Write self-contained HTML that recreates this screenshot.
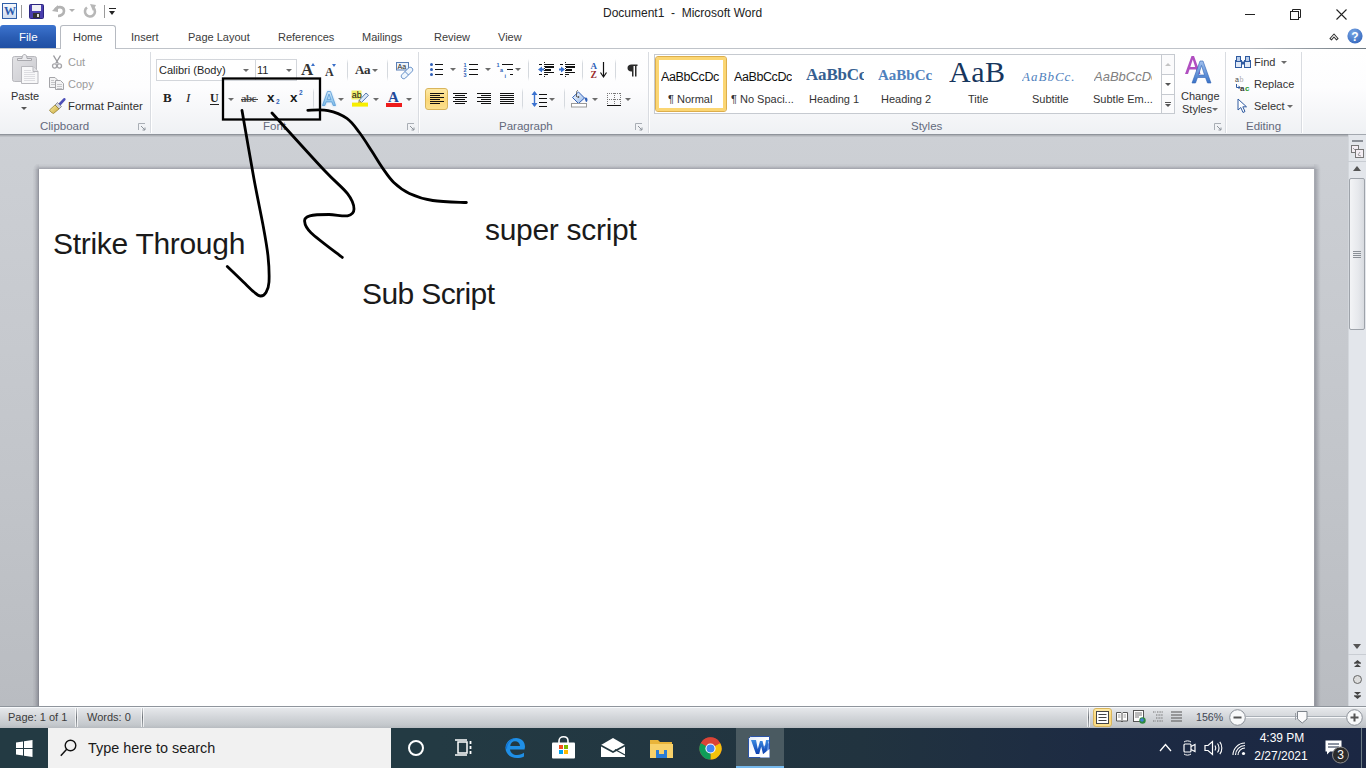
<!DOCTYPE html>
<html><head><meta charset="utf-8">
<style>
*{box-sizing:border-box;margin:0;padding:0}
html,body{width:1366px;height:768px;overflow:hidden;background:#fff;font-family:"Liberation Sans",sans-serif;font-size:11px;color:#3b3b3b;position:relative}
.a{position:absolute;white-space:nowrap}
svg{position:absolute;overflow:visible}
#ribbon{left:0;top:48px;width:1366px;height:87px;background:linear-gradient(#fff 0%,#fdfdfe 45%,#eff1f4 100%);border-top:1px solid #bfc3c9;border-bottom:1px solid #a3a8af}
#docarea{left:0;top:135px;width:1348px;height:571px;background:linear-gradient(#cdd0d5 0%,#cbced3 10%,#c4c7cc 49%,#babdc2 96%,#b9bcc1 100%)}
#page{left:39px;top:169px;width:1275px;height:540px;background:#fff}
#vscroll{left:1348px;top:135px;width:18px;height:571px;background:#e3e6eb;border-left:1px solid #d3d7dc}
#status{left:0;top:706px;width:1366px;height:22px;background:linear-gradient(#f8fafc 0,#f8fafc 1px,#e6e8eb 1px,#d4d7db 45%,#c4c8cc 85%,#b7bbc0 100%);border-top:1px solid #8f959c}
#taskbar{left:0;top:728px;width:1366px;height:40px;background:linear-gradient(90deg,#233a43 0%,#233a43 32%,#21333f 63%,#1d2b43 80%,#1b2743 100%)}
.t{line-height:12px;height:12px;color:#3c3c3c}
.gl{top:120px;line-height:13px;color:#63697c;font-size:11.5px}
.sep{position:absolute;width:1px;background:linear-gradient(rgba(210,214,220,0),#d5d9de 20%,#d5d9de 80%,rgba(210,214,220,0))}
.gsep{position:absolute;top:52px;width:2px;height:81px;border-left:1px solid #d9dce1;border-right:1px solid #fff}
.dd{position:absolute;width:0;height:0;border-left:3px solid transparent;border-right:3px solid transparent;border-top:3px solid #6b6b6b}
.launch{position:absolute;width:7px;height:7px;border-left:1px solid #a0a6ae;border-top:1px solid #a0a6ae}
.doc{font-size:30px;line-height:34px;color:#1a1a1a;letter-spacing:-.3px}
</style></head><body>

<!-- ============ TITLE BAR ============ -->
<div class="a" style="left:0;top:0;width:1366px;height:48px;background:#fff"></div>
<!-- Word icon -->
<div class="a" style="left:2px;top:3px;width:15px;height:16px;border:1px solid #2f5ea8;background:linear-gradient(#f6f9fd,#cfdcf0)"></div>
<div class="a" style="left:3px;top:4px;width:13px;height:14px;font:bold 12px 'Liberation Serif',serif;color:#2a5aad;line-height:14px;text-align:center;letter-spacing:-1px">W</div>
<div class="a" style="left:21px;top:5px;width:1px;height:13px;background:#9a9a9a"></div>
<!-- Save icon -->
<svg style="left:29px;top:4px" width="15" height="15" viewBox="0 0 15 15"><rect x="0.5" y="0.5" width="14" height="14" rx="1" fill="#4a3fae" stroke="#2c2680"/><rect x="3" y="1" width="9" height="6" fill="#f0f0f5"/><rect x="4" y="9" width="7" height="5" fill="#333"/><rect x="8" y="10" width="2" height="3" fill="#ddd"/></svg>
<!-- Undo -->
<svg style="left:52px;top:4px" width="14" height="14" viewBox="0 0 14 14"><path d="M3 6 C5 2,12 2,12 7 C12 10,9 12,6 12" fill="none" stroke="#b3b3b3" stroke-width="2.6"/><path d="M0 7 L6 1 L6 8 Z" fill="#b3b3b3"/></svg>
<div class="dd" style="left:69px;top:9px;border-top-color:#b0b0b0"></div>
<!-- Redo -->
<svg style="left:83px;top:4px" width="14" height="14" viewBox="0 0 14 14"><path d="M4 3.5 A5 5 0 1 0 10.5 4" fill="none" stroke="#b7b7b7" stroke-width="2.6"/><path d="M7 0 L13 1 L10 7 Z" fill="#b7b7b7"/></svg>
<div class="a" style="left:104px;top:5px;width:1px;height:13px;background:#9a9a9a"></div>
<div class="a" style="left:109px;top:8px;width:7px;height:1px;background:#222"></div>
<div class="dd" style="left:109px;top:11px;border-left-width:3.5px;border-right-width:3.5px;border-top:4px solid #222"></div>
<!-- title -->
<div class="a t" style="left:603px;top:7px;font-size:12px;color:#222;white-space:pre">Document1  -  Microsoft Word</div>
<!-- window controls -->
<div class="a" style="left:1245px;top:14px;width:10px;height:1px;background:#222"></div>
<svg style="left:1290px;top:9px" width="11" height="11" viewBox="0 0 11 11"><rect x="0.5" y="2.5" width="8" height="8" fill="#fff" stroke="#222"/><path d="M2.5 2.5 V0.5 H10.5 V8.5 H8.5" fill="none" stroke="#222"/></svg>
<svg style="left:1336px;top:9px" width="11" height="11" viewBox="0 0 11 11"><path d="M0.5 0.5 L10.5 10.5 M10.5 0.5 L0.5 10.5" stroke="#222" stroke-width="1.1"/></svg>

<!-- ============ TABS ============ -->
<div class="a" style="left:0;top:25px;width:56px;height:23px;background:linear-gradient(#3c74cf,#2a5cb3 55%,#1f4fa3);border-radius:3px 3px 0 0"></div>
<div class="a t" style="left:19px;top:31px;color:#fff;font-size:11.5px">File</div>
<div class="a" style="left:60px;top:25px;width:56px;height:24px;background:#fff;border:1px solid #b6bac1;border-bottom:none;border-radius:3px 3px 0 0;z-index:2"></div>
<div class="a t" style="left:73px;top:31px;z-index:3;color:#3a3a3a">Home</div>
<div class="a t" style="left:131px;top:31px">Insert</div>
<div class="a t" style="left:188px;top:31px">Page Layout</div>
<div class="a t" style="left:278px;top:31px">References</div>
<div class="a t" style="left:362px;top:31px">Mailings</div>
<div class="a t" style="left:434px;top:31px">Review</div>
<div class="a t" style="left:498px;top:31px">View</div>
<svg style="left:1329px;top:32px" width="10" height="9" viewBox="0 0 10 9"><path d="M1 6.5 L5 2 L9 6.5 L7.5 7.8 L5 5 L2.5 7.8 Z" fill="#fff" stroke="#333" stroke-width="1.1" stroke-linejoin="round"/></svg>
<svg style="left:1347px;top:28px" width="16" height="16" viewBox="0 0 16 16"><defs><radialGradient id="hg" cx="40%" cy="30%" r="70%"><stop offset="0" stop-color="#7aa7e6"/><stop offset="1" stop-color="#3a6cc0"/></radialGradient></defs><circle cx="8" cy="8" r="7.6" fill="url(#hg)"/><text x="8" y="12.5" font-family="Liberation Sans" font-weight="bold" font-size="12" fill="#fff" text-anchor="middle">?</text></svg>

<!-- ============ RIBBON ============ -->
<div id="ribbon" class="a"></div>
<div class="a" style="left:1200px;top:48px;width:166px;height:1px;background:linear-gradient(90deg,#b9bdc3 0%,#b9bdc3 30%,#6d7880 100%)"></div>
<!-- group separators -->
<div class="gsep" style="left:150px"></div>
<div class="gsep" style="left:418px"></div>
<div class="gsep" style="left:648px"></div>
<div class="gsep" style="left:1225px"></div>
<div class="gsep" style="left:1301px"></div>
<!-- group labels -->
<div class="a gl" style="left:40px">Clipboard</div>
<div class="a gl" style="left:263px">Font</div>
<div class="a gl" style="left:499px">Paragraph</div>
<div class="a gl" style="left:911px">Styles</div>
<div class="a gl" style="left:1246px">Editing</div>
<!-- launchers -->
<svg style="left:138px;top:123px" width="8" height="8" viewBox="0 0 8 8"><path d="M0.5 7 V0.5 H7" fill="none" stroke="#a9aeb5"/><path d="M3 3 L7 7 M7 4.5 V7 H4.5" fill="none" stroke="#8d939b"/></svg>
<svg style="left:407px;top:123px" width="8" height="8" viewBox="0 0 8 8"><path d="M0.5 7 V0.5 H7" fill="none" stroke="#a9aeb5"/><path d="M3 3 L7 7 M7 4.5 V7 H4.5" fill="none" stroke="#8d939b"/></svg>
<svg style="left:635px;top:123px" width="8" height="8" viewBox="0 0 8 8"><path d="M0.5 7 V0.5 H7" fill="none" stroke="#a9aeb5"/><path d="M3 3 L7 7 M7 4.5 V7 H4.5" fill="none" stroke="#8d939b"/></svg>
<svg style="left:1214px;top:123px" width="8" height="8" viewBox="0 0 8 8"><path d="M0.5 7 V0.5 H7" fill="none" stroke="#a9aeb5"/><path d="M3 3 L7 7 M7 4.5 V7 H4.5" fill="none" stroke="#8d939b"/></svg>

<!-- ===== Clipboard ===== -->
<svg style="left:11px;top:53px" width="28" height="33" viewBox="0 0 28 33">
 <defs><linearGradient id="cbg" x1="0" y1="0" x2="1" y2="1"><stop offset="0" stop-color="#e2e2e5"/><stop offset="1" stop-color="#cacacf"/></linearGradient></defs>
 <rect x="1.5" y="3.5" width="24" height="25" rx="2" fill="url(#cbg)" stroke="#b8b8bd"/>
 <path d="M6.5 7.5 H20.5 V5.5 H16 C16 3,15 1.5,13.5 1.5 C12 1.5,11 3,11 5.5 H6.5 Z" fill="#ececef" stroke="#a8a8ad"/>
 <path d="M10.5 13.5 H22 L27 18.5 V30.5 H10.5 Z" fill="#f8f8f9" stroke="#b8b8bd"/>
 <path d="M22 13.5 V18.5 H27" fill="#e3e3e6" stroke="#b8b8bd"/>
 <path d="M13 17.5 H20 M13 19.5 H24 M13 21.5 H24 M13 23.5 H24 M13 25.5 H24 M13 27.5 H24" stroke="#d6d6da" stroke-width=".8"/>
</svg>
<div class="a t" style="left:11px;top:90px;color:#2f2f2f;font-size:11px">Paste</div>
<div class="dd" style="left:21px;top:107px;border-top-color:#555"></div>
<svg style="left:52px;top:55px" width="10" height="14" viewBox="0 0 10 14"><path d="M1.5 0.5 L6.3 8.5 M8.5 0.5 L3.7 8.5" stroke="#9a9a9e" stroke-width="1.4"/><circle cx="2.6" cy="11" r="2.1" fill="none" stroke="#a5a5a9" stroke-width="1.3"/><circle cx="7.4" cy="11" r="2.1" fill="none" stroke="#a5a5a9" stroke-width="1.3"/></svg>
<div class="a t" style="left:68px;top:56px;color:#9b9b9b">Cut</div>
<svg style="left:49px;top:77px" width="15" height="13" viewBox="0 0 15 13"><path d="M0.5 0.5 H6 L8.5 3 V10.5 H0.5 Z" fill="#f3f3f4" stroke="#a4a4a8"/><path d="M2 3.5 H5 M2 5.5 H6.5 M2 7.5 H6.5" stroke="#b9b9bd" stroke-width=".8"/><path d="M6.5 3.5 H11.5 L14.5 6.5 V12.5 H6.5 Z" fill="#f3f3f4" stroke="#a4a4a8"/><path d="M8 7.5 H13 M8 9.5 H13 M8 11.5 H13" stroke="#b9b9bd" stroke-width=".8"/></svg>
<div class="a t" style="left:68px;top:78px;color:#9b9b9b">Copy</div>
<svg style="left:49px;top:98px" width="16" height="16" viewBox="0 0 16 16"><defs><linearGradient id="brs" x1="0" y1="0" x2="1" y2="1"><stop offset="0" stop-color="#fbf0a8"/><stop offset="1" stop-color="#c9a83a"/></linearGradient></defs><path d="M15.3 1.3 L11 6" stroke="#4d4fb8" stroke-width="2.6" stroke-linecap="round"/><path d="M8.5 4.5 L12.5 8.5 L10 11 L6 7 Z" fill="#cfd2da" stroke="#6d7078" stroke-width=".7"/><path d="M6 7 L10 11 L4.5 15.5 C3 15,1 13.5,0.5 12 Z" fill="url(#brs)" stroke="#8a7628" stroke-width=".7"/></svg>
<div class="a t" style="left:68px;top:100px;color:#2f2f2f;font-size:11.3px">Format Painter</div>

<!-- ===== Font ===== -->
<div class="a" style="left:156px;top:59px;width:100px;height:22px;border:1px solid #d3d6db;background:#fff"></div>
<div class="a" style="left:255px;top:59px;width:42px;height:22px;border:1px solid #d3d6db;background:#fff"></div>
<div class="a t" style="left:159px;top:64px;color:#1f1f1f">Calibri (Body)</div>
<div class="dd" style="left:243px;top:69px"></div>
<div class="a t" style="left:257px;top:64px;color:#1f1f1f">11</div>
<div class="dd" style="left:286px;top:69px"></div>
<!-- grow/shrink -->
<div class="a" style="left:301px;top:61px;font:bold 17px/18px 'Liberation Serif',serif;color:#333">A</div>
<div class="a" style="left:311px;top:63px;width:0;height:0;border-left:2.5px solid transparent;border-right:2.5px solid transparent;border-bottom:3px solid #3a70c9"></div>
<div class="a" style="left:325px;top:66px;font:bold 12px/13px 'Liberation Serif',serif;color:#333">A</div>
<div class="a" style="left:332px;top:64px;width:0;height:0;border-left:2.5px solid transparent;border-right:2.5px solid transparent;border-top:3px solid #3a70c9"></div>
<div class="sep" style="left:347px;top:59px;height:22px"></div>
<div class="a" style="left:355px;top:62px;font:bold 13px/15px 'Liberation Serif',serif;color:#333;letter-spacing:-.5px">Aa</div>
<div class="dd" style="left:372px;top:69px"></div>
<div class="sep" style="left:387px;top:59px;height:22px"></div>
<svg style="left:396px;top:62px" width="17" height="16" viewBox="0 0 17 16"><rect x="0.5" y="0.5" width="12" height="7.5" fill="#eef3fa" stroke="#5a7fb5"/><text x="1.5" y="7" font-family="Liberation Sans" font-size="7" fill="#222">Aa</text><path d="M6 12.5 L12.5 6 C13.5 5,15 5,16 6 C17 7,17 8.5,16 9.5 L9.5 16 C8.5 17,7 17,6 16 C5 15,5 13.5,6 12.5 Z" fill="#eef5fc" stroke="#4f7fc0" stroke-width=".9"/><path d="M9 9.5 L12.5 13" stroke="#4f7fc0" stroke-width=".9"/></svg>
<!-- row 2 -->
<div class="a" style="left:163px;top:91px;font:bold 13px/14px 'Liberation Serif',serif;color:#222">B</div>
<div class="a" style="left:186px;top:91px;font:italic 13px/14px 'Liberation Serif',serif;color:#222">I</div>
<div class="a" style="left:210px;top:91px;font:bold 12px/14px 'Liberation Serif',serif;color:#222">U</div>
<div class="a" style="left:210px;top:104px;width:9px;height:1px;background:#222"></div>
<div class="dd" style="left:228px;top:98px"></div>
<div class="a" style="left:241px;top:91px;font:bold 11px/14px 'Liberation Serif',serif;color:#555;letter-spacing:-.6px">abc</div>
<div class="a" style="left:241px;top:99px;width:17px;height:1px;background:#444"></div>
<div class="a" style="left:267px;top:91px;font:bold 13.5px/14px 'Liberation Sans',sans-serif;color:#1a1a1a">x</div>
<div class="a" style="left:276px;top:98px;font:bold 6.5px/7px 'Liberation Sans',sans-serif;color:#2f5fb8">2</div>
<div class="a" style="left:290px;top:91px;font:bold 13.5px/14px 'Liberation Sans',sans-serif;color:#1a1a1a">x</div>
<div class="a" style="left:299px;top:89px;font:bold 6.5px/7px 'Liberation Sans',sans-serif;color:#2f5fb8">2</div>
<div class="sep" style="left:313px;top:88px;height:22px"></div>
<svg style="left:320px;top:89px" width="18" height="19" viewBox="0 0 18 19"><defs><filter id="gl" x="-40%" y="-40%" width="180%" height="180%"><feGaussianBlur stdDeviation="1.1"/></filter><linearGradient id="tea" x1="0" y1="0" x2="0" y2="1"><stop offset="0" stop-color="#cfe6f8"/><stop offset="1" stop-color="#7cbde9"/></linearGradient></defs><path d="M7.5 2 H10.5 L16 17 H13 L11.7 13.3 H6.3 L5 17 H2 Z" fill="#a9d3f3" filter="url(#gl)"/><path d="M7.5 2.5 H10.5 L15.5 16.5 H13.2 L11.8 12.8 H6.2 L4.8 16.5 H2.5 Z M7 10.6 H11 L9 5 Z" fill="url(#tea)" stroke="#5a9ad6" stroke-width=".8" fill-rule="evenodd"/></svg>
<div class="dd" style="left:338px;top:98px"></div>
<svg style="left:351px;top:90px" width="19" height="18" viewBox="0 0 19 18"><rect x="0.5" y="0.5" width="10" height="9" fill="#f1ee6a"/><text x="0.8" y="8" font-family="Liberation Sans" font-size="9" fill="#111">ab</text><path d="M8 10.5 L15 3 L17.5 5.3 L10.5 12.5 Z" fill="#dbe8f7" stroke="#4a6fa8" stroke-width=".9"/><path d="M8 10.5 L10.5 12.5 L7.5 13 Z" fill="#e6c36a" stroke="#8a6a2a" stroke-width=".5"/><rect x="1" y="12.6" width="16" height="4" fill="#f7ee00"/></svg>
<div class="dd" style="left:373px;top:98px"></div>
<div class="a" style="left:388px;top:89px;font:bold 15px/16px 'Liberation Serif',serif;color:#1f4a9a">A</div>
<div class="a" style="left:386px;top:103px;width:16px;height:4px;background:#ee1c1c"></div>
<div class="dd" style="left:406px;top:98px"></div>



<!-- ===== Paragraph ===== -->
<svg style="left:429px;top:62px" width="15" height="14" viewBox="0 0 15 14"><circle cx="2.5" cy="2.5" r="1.5" fill="#2f5fb8"/><circle cx="2.5" cy="7.5" r="1.5" fill="#2f5fb8"/><circle cx="2.5" cy="12.5" r="1.5" fill="#2f5fb8"/><g shape-rendering="crispEdges"><rect x="6" y="2" width="8" height="1" fill="#111"/><rect x="6" y="7" width="8" height="1" fill="#111"/><rect x="6" y="12" width="8" height="1" fill="#111"/></g></svg>
<div class="dd" style="left:450px;top:68px"></div>
<svg style="left:463px;top:61px" width="16" height="16" viewBox="0 0 16 16"><text x="0.5" y="6" font-family="Liberation Sans" font-weight="bold" font-size="5.5" fill="#2f5fb8">1</text><text x="0.5" y="11" font-family="Liberation Sans" font-weight="bold" font-size="5.5" fill="#2f5fb8">2</text><text x="0.5" y="16" font-family="Liberation Sans" font-weight="bold" font-size="5.5" fill="#2f5fb8">3</text><g shape-rendering="crispEdges"><rect x="6" y="3" width="9" height="1" fill="#111"/><rect x="6" y="8" width="9" height="1" fill="#111"/><rect x="6" y="13" width="9" height="1" fill="#111"/></g></svg>
<div class="dd" style="left:485px;top:68px"></div>
<svg style="left:496px;top:61px" width="18" height="17" viewBox="0 0 18 17"><text x="0.5" y="6" font-family="Liberation Sans" font-weight="bold" font-size="5.5" fill="#2f5fb8">1</text><text x="4" y="11" font-family="Liberation Sans" font-weight="bold" font-size="5.5" fill="#2f5fb8">a</text><text x="8.5" y="16.5" font-family="Liberation Sans" font-weight="bold" font-size="5.5" fill="#2f5fb8">i</text><g shape-rendering="crispEdges"><rect x="6" y="3" width="11" height="1" fill="#111"/><rect x="11" y="8" width="6" height="1" fill="#111"/><rect x="14" y="13" width="3" height="1" fill="#111"/></g></svg>
<div class="dd" style="left:515px;top:68px"></div>
<div class="sep" style="left:528px;top:59px;height:22px"></div>
<svg style="left:538px;top:62px" width="16" height="16" viewBox="0 0 16 16" shape-rendering="crispEdges"><rect x="6" y="0" width="1" height="1" fill="#222"/><rect x="6" y="2" width="1" height="1" fill="#222"/><rect x="6" y="4" width="1" height="1" fill="#222"/><rect x="6" y="6" width="1" height="1" fill="#222"/><rect x="6" y="8" width="1" height="1" fill="#222"/><rect x="6" y="10" width="1" height="1" fill="#222"/><rect x="6" y="12" width="1" height="1" fill="#222"/><rect x="6" y="14" width="1" height="1" fill="#222"/><rect x="1" y="2" width="3" height="1" fill="#111"/><rect x="7" y="2" width="9" height="1" fill="#111"/><rect x="7" y="4" width="9" height="2" fill="#111"/><rect x="7" y="7" width="6" height="2" fill="#111"/><rect x="7" y="10" width="9" height="1" fill="#111"/><rect x="1" y="12" width="3" height="1" fill="#111"/><rect x="7" y="12" width="3" height="1" fill="#111"/><path d="M0 7.5 L4 4.5 V6.5 H6 V8.5 H4 V10.5 Z" fill="#3a72d0" shape-rendering="auto"/></svg>
<svg style="left:559px;top:62px" width="16" height="16" viewBox="0 0 16 16" shape-rendering="crispEdges"><rect x="6" y="0" width="1" height="1" fill="#222"/><rect x="6" y="2" width="1" height="1" fill="#222"/><rect x="6" y="4" width="1" height="1" fill="#222"/><rect x="6" y="6" width="1" height="1" fill="#222"/><rect x="6" y="8" width="1" height="1" fill="#222"/><rect x="6" y="10" width="1" height="1" fill="#222"/><rect x="6" y="12" width="1" height="1" fill="#222"/><rect x="6" y="14" width="1" height="1" fill="#222"/><rect x="1" y="2" width="3" height="1" fill="#111"/><rect x="7" y="2" width="9" height="1" fill="#111"/><rect x="7" y="4" width="9" height="2" fill="#111"/><rect x="7" y="7" width="6" height="2" fill="#111"/><rect x="7" y="10" width="9" height="1" fill="#111"/><rect x="1" y="12" width="3" height="1" fill="#111"/><rect x="7" y="12" width="3" height="1" fill="#111"/><path d="M6 7.5 L2 4.5 V6.5 H0 V8.5 H2 V10.5 Z" fill="#3a72d0" shape-rendering="auto"/></svg>
<div class="sep" style="left:582px;top:59px;height:22px"></div>
<svg style="left:590px;top:61px" width="17" height="17" viewBox="0 0 17 17"><text x="0.5" y="8" font-family="Liberation Serif" font-weight="bold" font-size="9" fill="#2f5fb8">A</text><text x="0.5" y="16.5" font-family="Liberation Serif" font-weight="bold" font-size="9.5" fill="#9a2e2e">Z</text><path d="M13.5 1 V15" stroke="#111" stroke-width="1.2"/><path d="M10.5 11.5 L13.5 16 L16.5 11.5" fill="none" stroke="#111" stroke-width="1.2"/></svg>
<div class="sep" style="left:615px;top:59px;height:22px"></div>
<svg style="left:627px;top:64px" width="11" height="13" viewBox="0 0 11 13"><path d="M4.5 0.5 H10.5 V2 H9.5 V12.5 H8 V2 H6.5 V12.5 H5 V7.5 H4.5 C2 7.5,0.5 6,0.5 4 C0.5 2,2 0.5,4.5 0.5 Z" fill="#2b2b2b"/></svg>
<!-- row 2 -->
<div class="a" style="left:425px;top:88px;width:23px;height:22px;border:1px solid #d9b55c;border-radius:3px;background:linear-gradient(#fde9a6,#fbd777 55%,#fbe08e)"></div>
<svg style="left:430px;top:93px" width="14" height="11" viewBox="0 0 14 11" shape-rendering="crispEdges"><rect x="0" y="0" width="14" height="1" fill="#111"/><rect x="0" y="2" width="10" height="1" fill="#111"/><rect x="0" y="4" width="14" height="1" fill="#111"/><rect x="0" y="6" width="10" height="1" fill="#111"/><rect x="0" y="8" width="14" height="1" fill="#111"/><rect x="0" y="10" width="10" height="1" fill="#111"/></svg>
<svg style="left:453px;top:93px" width="14" height="11" viewBox="0 0 14 11" shape-rendering="crispEdges"><rect x="0" y="0" width="14" height="1" fill="#111"/><rect x="2" y="2" width="10" height="1" fill="#111"/><rect x="0" y="4" width="14" height="1" fill="#111"/><rect x="2" y="6" width="10" height="1" fill="#111"/><rect x="0" y="8" width="14" height="1" fill="#111"/><rect x="2" y="10" width="10" height="1" fill="#111"/></svg>
<svg style="left:477px;top:93px" width="14" height="11" viewBox="0 0 14 11" shape-rendering="crispEdges"><rect x="0" y="0" width="14" height="1" fill="#111"/><rect x="4" y="2" width="10" height="1" fill="#111"/><rect x="0" y="4" width="14" height="1" fill="#111"/><rect x="4" y="6" width="10" height="1" fill="#111"/><rect x="0" y="8" width="14" height="1" fill="#111"/><rect x="4" y="10" width="10" height="1" fill="#111"/></svg>
<svg style="left:500px;top:93px" width="14" height="11" viewBox="0 0 14 11" shape-rendering="crispEdges"><rect x="0" y="0" width="14" height="1" fill="#111"/><rect x="0" y="2" width="14" height="1" fill="#111"/><rect x="0" y="4" width="14" height="1" fill="#111"/><rect x="0" y="6" width="14" height="1" fill="#111"/><rect x="0" y="8" width="14" height="1" fill="#111"/><rect x="0" y="10" width="14" height="1" fill="#111"/></svg>
<div class="sep" style="left:522px;top:88px;height:22px"></div>
<svg style="left:531px;top:90px" width="17" height="18" viewBox="0 0 17 18"><path d="M3.5 2 V16" stroke="#3a72d0" stroke-width="1.4"/><path d="M0.5 5 L3.5 1 L6.5 5 Z M0.5 13 L3.5 17 L6.5 13 Z" fill="#3a72d0"/><g shape-rendering="crispEdges"><rect x="8" y="4" width="8" height="1" fill="#111"/><rect x="8" y="8" width="8" height="1" fill="#111"/><rect x="8" y="12" width="8" height="1" fill="#111"/><rect x="8" y="16" width="8" height="1" fill="#111"/></g></svg>
<div class="dd" style="left:549px;top:98px"></div>
<div class="sep" style="left:564px;top:88px;height:22px"></div>
<svg style="left:571px;top:90px" width="18" height="18" viewBox="0 0 18 18"><defs><linearGradient id="bk" x1="0" y1="0" x2="1" y2="1"><stop offset="0" stop-color="#fff"/><stop offset="1" stop-color="#8fb4e8"/></linearGradient></defs><path d="M1.5 7.5 L7.5 2 L13.5 8 L7.5 13.5 Z" fill="url(#bk)" stroke="#2f5fb8" stroke-width="1"/><path d="M7 0.5 C6 0.5,5.5 1.5,5.5 2.5 V7" fill="none" stroke="#555" stroke-width=".9"/><circle cx="7.3" cy="7" r="1" fill="#555"/><path d="M13.5 8 C15.5 6.5,16.5 8,16.5 10 C16.5 11.5,15.5 12,15 12 C14.5 11,14 9.5,13.5 8 Z" fill="#2f5fb8"/><rect x="0.5" y="13.5" width="15" height="3.5" fill="#fff" stroke="#999"/></svg>
<div class="dd" style="left:592px;top:98px"></div>
<svg style="left:607px;top:93px" width="14" height="14" viewBox="0 0 14 14" shape-rendering="crispEdges"><rect x="0" y="0" width="1" height="1" fill="#777"/><rect x="0" y="6" width="1" height="1" fill="#777"/><rect x="2" y="0" width="1" height="1" fill="#777"/><rect x="2" y="6" width="1" height="1" fill="#777"/><rect x="4" y="0" width="1" height="1" fill="#777"/><rect x="4" y="6" width="1" height="1" fill="#777"/><rect x="6" y="0" width="1" height="1" fill="#777"/><rect x="6" y="6" width="1" height="1" fill="#777"/><rect x="8" y="0" width="1" height="1" fill="#777"/><rect x="8" y="6" width="1" height="1" fill="#777"/><rect x="10" y="0" width="1" height="1" fill="#777"/><rect x="10" y="6" width="1" height="1" fill="#777"/><rect x="12" y="0" width="1" height="1" fill="#777"/><rect x="12" y="6" width="1" height="1" fill="#777"/><rect x="0" y="0" width="1" height="1" fill="#777"/><rect x="7" y="0" width="1" height="1" fill="#777"/><rect x="13" y="0" width="1" height="1" fill="#777"/><rect x="0" y="2" width="1" height="1" fill="#777"/><rect x="7" y="2" width="1" height="1" fill="#777"/><rect x="13" y="2" width="1" height="1" fill="#777"/><rect x="0" y="4" width="1" height="1" fill="#777"/><rect x="7" y="4" width="1" height="1" fill="#777"/><rect x="13" y="4" width="1" height="1" fill="#777"/><rect x="0" y="6" width="1" height="1" fill="#777"/><rect x="7" y="6" width="1" height="1" fill="#777"/><rect x="13" y="6" width="1" height="1" fill="#777"/><rect x="0" y="8" width="1" height="1" fill="#777"/><rect x="7" y="8" width="1" height="1" fill="#777"/><rect x="13" y="8" width="1" height="1" fill="#777"/><rect x="0" y="10" width="1" height="1" fill="#777"/><rect x="7" y="10" width="1" height="1" fill="#777"/><rect x="13" y="10" width="1" height="1" fill="#777"/><rect x="0" y="12" width="14" height="1" fill="#111"/></svg>
<div class="dd" style="left:625px;top:98px"></div>

<!-- ===== Styles ===== -->
<div class="a" style="left:654px;top:54px;width:521px;height:60px;border:1px solid #c6cad0;background:#fff"></div>
<div class="a" style="left:655px;top:56px;width:72px;height:56px;border:1px solid #dcae4c;border-radius:3px;box-shadow:inset 0 0 0 3px #fbd673;background:#fff"></div>
<div class="a" style="left:661px;top:70px;width:59px;overflow:hidden;font:12.5px/14px 'Liberation Sans',sans-serif;color:#111;letter-spacing:-.4px">AaBbCcDc</div>
<div class="a t" style="left:668px;top:93px;color:#333">&#182; Normal</div>
<div class="a" style="left:734px;top:70px;width:58px;overflow:hidden;font:12.5px/14px 'Liberation Sans',sans-serif;color:#111;letter-spacing:-.4px">AaBbCcDc</div>
<div class="a t" style="left:731px;top:93px;color:#333">&#182; No Spaci...</div>
<div class="a" style="left:806px;top:66px;width:58px;overflow:hidden;font:bold 17px/18px 'Liberation Serif',serif;color:#365f91;letter-spacing:-.2px">AaBbCc</div>
<div class="a t" style="left:809px;top:93px;color:#333">Heading 1</div>
<div class="a" style="left:878px;top:67px;width:59px;overflow:hidden;font:bold 15px/17px 'Liberation Serif',serif;color:#4f81bd">AaBbCc</div>
<div class="a t" style="left:881px;top:93px;color:#333">Heading 2</div>
<div class="a" style="left:949px;top:62px;width:59px;height:24px;overflow:hidden"><div class="a" style="left:0;top:-5px;font:30px/30px 'Liberation Serif',serif;color:#17365d;letter-spacing:.5px">AaB</div></div>
<div class="a t" style="left:968px;top:93px;color:#333">Title</div>
<div class="a" style="left:1022px;top:69px;width:59px;overflow:hidden;font:italic 13px/15px 'Liberation Serif',serif;color:#4f81bd;letter-spacing:1px">AaBbCc.</div>
<div class="a t" style="left:1032px;top:93px;color:#333">Subtitle</div>
<div class="a" style="left:1094px;top:69px;width:58px;overflow:hidden;font:italic 13px/15px 'Liberation Sans',sans-serif;color:#808080;letter-spacing:0px">AaBbCcDc</div>
<div class="a t" style="left:1093px;top:93px;color:#333">Subtle Em...</div>
<!-- gallery scroll -->
<div class="a" style="left:1161px;top:54px;width:14px;height:60px;border:1px solid #c6cad0;background:#fbfbfc"></div>
<div class="a" style="left:1161px;top:74px;width:14px;height:21px;border:1px solid #c6cad0;background:#fff"></div>
<div class="a" style="left:1165px;top:63px;width:0;height:0;border-left:3px solid transparent;border-right:3px solid transparent;border-bottom:3px solid #c3c3c3"></div>
<div class="a" style="left:1165px;top:83px;width:0;height:0;border-left:3px solid transparent;border-right:3px solid transparent;border-top:3px solid #555"></div>
<div class="a" style="left:1165px;top:102px;width:6px;height:1px;background:#555"></div>
<div class="a" style="left:1165px;top:104px;width:0;height:0;border-left:3px solid transparent;border-right:3px solid transparent;border-top:3px solid #555"></div>
<!-- change styles -->
<svg style="left:1184px;top:55px" width="32" height="29" viewBox="0 0 32 29"><defs><linearGradient id="csA" x1="0" y1="0" x2="0" y2="1"><stop offset="0" stop-color="#9fc0ee"/><stop offset="1" stop-color="#3a73c8"/></linearGradient></defs><path d="M1 19 L7.5 1 H10 L16.5 19 H13.5 L12 14.5 H5.5 L4 19 Z M6.3 12 H11.2 L8.75 4.5 Z" fill="#b04fc0"/><path d="M8 28 L16 6 H19 L27 28 H23.5 L21.5 22.5 H13.5 L11.5 28 Z M14.5 20 H20.5 L17.5 10.5 Z" fill="url(#csA)" stroke="#2f62b3" stroke-width=".6"/></svg>
<div class="a t" style="left:1181px;top:90px;color:#333">Change</div>
<div class="a t" style="left:1182px;top:103px;color:#333">Styles</div>
<div class="dd" style="left:1212px;top:108px"></div>

<!-- ===== Editing ===== -->
<svg style="left:1235px;top:55px" width="16" height="13" viewBox="0 0 16 13"><rect x="0.5" y="5.5" width="6" height="7" fill="#dfe8f6" stroke="#2f5aa0"/><rect x="9.5" y="5.5" width="6" height="7" fill="#dfe8f6" stroke="#2f5aa0"/><rect x="1.5" y="1.5" width="4" height="5" fill="#b9cdea" stroke="#2f5aa0"/><rect x="10.5" y="1.5" width="4" height="5" fill="#b9cdea" stroke="#2f5aa0"/><rect x="6" y="6.5" width="4" height="3" fill="#2f5aa0"/></svg>
<div class="a t" style="left:1254px;top:56px;color:#333">Find</div>
<div class="dd" style="left:1281px;top:61px"></div>
<svg style="left:1235px;top:76px" width="17" height="16" viewBox="0 0 17 16"><text x="0" y="6" font-family="Liberation Sans" font-size="7" fill="#444">a</text><text x="4.5" y="6" font-family="Liberation Serif" font-size="8" fill="#aaa">b</text><path d="M1.5 8 V11.5 H5 M3.5 9.8 L5 11.5 L3.5 13" fill="none" stroke="#2f5aa0" stroke-width="1"/><text x="5" y="15" font-family="Liberation Sans" font-weight="bold" font-size="8" fill="#333">a</text><text x="10" y="15" font-family="Liberation Sans" font-weight="bold" font-size="8" fill="#2a9a2a">c</text></svg>
<div class="a t" style="left:1254px;top:78px;color:#333">Replace</div>
<svg style="left:1237px;top:98px" width="11" height="16" viewBox="0 0 11 16"><path d="M1 1 V12 L3.8 9.5 L6 14.5 L8 13.5 L5.8 8.8 H9.5 Z" fill="#fff" stroke="#2f5aa0" stroke-width="1" stroke-linejoin="round"/></svg>
<div class="a t" style="left:1254px;top:100px;color:#333">Select</div>
<div class="dd" style="left:1287px;top:105px"></div>

<!-- ============ DOC AREA ============ -->
<div id="docarea" class="a"></div>
<div class="a" style="left:0;top:134px;width:1348px;height:3px;background:linear-gradient(#8f949b 0,#8f949b 1px,#aeb1b6 1px,#aeb1b6 2px,#bfc2c7 2px)"></div>
<div class="a" style="left:33px;top:169px;width:6px;height:540px;background:linear-gradient(90deg,rgba(0,0,20,.03) 0,rgba(0,0,20,.03) 1px,rgba(0,0,20,.05) 1px,rgba(0,0,20,.05) 2px,rgba(0,0,20,.09) 2px,rgba(0,0,20,.09) 3px,rgba(0,0,20,.14) 3px,rgba(0,0,20,.14) 4px,rgba(0,0,20,.19) 4px,rgba(0,0,20,.19) 5px,rgba(0,0,20,.27) 5px)"></div>
<div class="a" style="left:1314px;top:169px;width:7px;height:540px;background:linear-gradient(90deg,rgba(0,0,20,.18) 0,rgba(0,0,20,.18) 1px,rgba(0,0,20,.2) 1px,rgba(0,0,20,.2) 2px,rgba(0,0,20,.16) 2px,rgba(0,0,20,.16) 3px,rgba(0,0,20,.12) 3px,rgba(0,0,20,.12) 4px,rgba(0,0,20,.08) 4px,rgba(0,0,20,.08) 5px,rgba(0,0,20,.04) 5px,rgba(0,0,20,.04) 6px,rgba(0,0,20,.01) 6px)"></div>
<div class="a" style="left:39px;top:164px;width:1275px;height:5px;background:linear-gradient(rgba(0,0,20,.02) 0,rgba(0,0,20,.02) 1px,rgba(0,0,20,.03) 1px,rgba(0,0,20,.03) 2px,rgba(0,0,20,.07) 2px,rgba(0,0,20,.07) 3px,rgba(0,0,20,.13) 3px,rgba(0,0,20,.13) 4px,rgba(0,0,20,.19) 4px)"></div>
<div class="a" style="left:33px;top:164px;width:6px;height:5px;background:radial-gradient(circle at 100% 100%,rgba(0,0,20,.2) 0,rgba(0,0,20,.08) 3px,rgba(0,0,20,0) 6px)"></div>
<div class="a" style="left:1314px;top:164px;width:7px;height:5px;background:radial-gradient(circle at 0 100%,rgba(0,0,20,.18) 0,rgba(0,0,20,.08) 3px,rgba(0,0,20,0) 7px)"></div>
<div id="page" class="a"></div>
<div id="vscroll" class="a"></div>
<!-- scrollbar parts -->
<div class="a" style="left:1352px;top:140px;width:11px;height:2px;background:#8a8f96"></div>
<svg style="left:1351px;top:145px" width="13" height="13" viewBox="0 0 13 13"><rect x="0.5" y="0.5" width="7" height="7" fill="#f4eef4" stroke="#777"/><rect x="4.5" y="4.5" width="8" height="8" fill="#f4eef4" stroke="#777"/><path d="M2 3 L4 5 M9 7 L7 10 L10 11" fill="none" stroke="#888" stroke-width=".8"/></svg>
<div class="a" style="left:1348px;top:161px;width:18px;height:1px;background:#c9cdd3"></div>
<div class="a" style="left:1353px;top:166px;width:0;height:0;border-left:4.5px solid transparent;border-right:4.5px solid transparent;border-bottom:5px solid #555"></div>
<div class="a" style="left:1349px;top:178px;width:16px;height:152px;border:1px solid #9ea3aa;border-radius:2px;background:linear-gradient(90deg,#f3f4f6,#e6e8ec 60%,#d8dbe0)"></div>
<div class="a" style="left:1353px;top:251px;width:8px;height:1px;background:#8a8f96;box-shadow:0 2px 0 #8a8f96,0 4px 0 #8a8f96,0 6px 0 #8a8f96"></div>
<div class="a" style="left:1353px;top:644px;width:0;height:0;border-left:4.5px solid transparent;border-right:4.5px solid transparent;border-top:5px solid #555"></div>
<div class="a" style="left:1348px;top:654px;width:18px;height:1px;background:#c9cdd3"></div>
<svg style="left:1353px;top:659px" width="9" height="9" viewBox="0 0 9 9"><path d="M1 4 L4.5 1 L8 4 Z M1 8 L4.5 5 L8 8 Z" fill="#444"/><path d="M1 4.2 H8" stroke="#444"/></svg>
<div class="a" style="left:1353px;top:675px;width:9px;height:9px;border:1px solid #666;border-radius:50%;background:#ddd"></div>
<svg style="left:1353px;top:691px" width="9" height="9" viewBox="0 0 9 9"><path d="M1 1 L4.5 4 L8 1 Z M1 5 L4.5 8 L8 5 Z" fill="#444"/><path d="M1 4.8 H8" stroke="#444"/></svg>

<!-- document text -->
<div class="a doc" style="left:53px;top:227px">Strike Through</div>
<div class="a doc" style="left:485px;top:213px">super script</div>
<div class="a doc" style="left:362px;top:277px;letter-spacing:-.6px">Sub Script</div>


<!-- ============ STATUS BAR ============ -->
<div id="status" class="a"></div>
<div class="a t" style="left:8px;top:711px;color:#3c3c3c">Page: 1 of 1</div>
<div class="a" style="left:75px;top:708px;width:3px;height:19px;background:linear-gradient(90deg,rgba(255,255,255,.7) 0,rgba(255,255,255,.7) 1px,transparent 1px,transparent 2px,rgba(255,255,255,.7) 2px)"></div><div class="a" style="left:76px;top:708px;width:1px;height:19px;background:linear-gradient(rgba(100,105,112,.2),#6c7177 50%,rgba(100,105,112,.2))"></div>
<div class="a t" style="left:87px;top:711px;color:#3c3c3c">Words: 0</div>
<div class="a" style="left:141px;top:708px;width:3px;height:19px;background:linear-gradient(90deg,rgba(255,255,255,.7) 0,rgba(255,255,255,.7) 1px,transparent 1px,transparent 2px,rgba(255,255,255,.7) 2px)"></div><div class="a" style="left:142px;top:708px;width:1px;height:19px;background:linear-gradient(rgba(100,105,112,.2),#6c7177 50%,rgba(100,105,112,.2))"></div>
<div class="a" style="left:1087px;top:708px;width:3px;height:19px;background:linear-gradient(90deg,rgba(255,255,255,.7) 0,rgba(255,255,255,.7) 1px,transparent 1px,transparent 2px,rgba(255,255,255,.7) 2px)"></div><div class="a" style="left:1088px;top:708px;width:1px;height:19px;background:linear-gradient(rgba(100,105,112,.2),#6c7177 50%,rgba(100,105,112,.2))"></div>
<div class="a" style="left:1093px;top:708px;width:19px;height:19px;border:1px solid #d9b55c;border-radius:3px;background:linear-gradient(#fde9a6,#fbd777 55%,#fbe08e)"></div>
<svg style="left:1096px;top:711px" width="13" height="13" viewBox="0 0 13 13"><rect x="0.5" y="0.5" width="12" height="12" fill="#fff" stroke="#444"/><path d="M2.5 3.5 H10.5 M2.5 6.5 H10.5 M2.5 9.5 H10.5" stroke="#444" stroke-width="1"/></svg>
<svg style="left:1116px;top:711px" width="12" height="12" viewBox="0 0 12 12"><path d="M0.5 1.5 H5 L6 2.5 L7 1.5 H11.5 V10 H7 L6 11 L5 10 H0.5 Z" fill="#fff" stroke="#555"/><path d="M6 2.5 V10" stroke="#555"/><path d="M2 4 H4.5 M2 6 H4.5 M7.5 4 H10 M7.5 6 H10" stroke="#888" stroke-width=".8"/></svg>
<svg style="left:1133px;top:710px" width="13" height="14" viewBox="0 0 13 14"><rect x="0.5" y="0.5" width="10" height="11" fill="#fff" stroke="#555"/><path d="M2 3 H9 M2 5 H9 M2 7 H6" stroke="#555" stroke-width=".8"/><circle cx="9.5" cy="10.5" r="3.2" fill="#2d8a3e"/><circle cx="9" cy="10" r="1.8" fill="#3f7fd6"/></svg>
<svg style="left:1153px;top:711px" width="10" height="12" viewBox="0 0 10 12"><path d="M0 1 H3 M4 1 H10 M3 4 H10 M3 7 H10 M0 10 H3 M4 10 H10" stroke="#666" stroke-width=".9" stroke-dasharray="1 .6"/></svg>
<svg style="left:1171px;top:711px" width="11" height="12" viewBox="0 0 11 12"><path d="M0 1 H11 M0 4 H11 M0 7 H11 M0 10 H11" stroke="#555" stroke-width="1.1"/></svg>
<div class="a t" style="left:1196px;top:711px;color:#414753;font-size:10.6px">156%</div>
<svg style="left:1229px;top:709px" width="17" height="17" viewBox="0 0 17 17"><circle cx="8.5" cy="8.5" r="7.8" fill="#f8f9fa" stroke="#8c9199"/><path d="M4.5 8.5 H12.5" stroke="#555" stroke-width="2"/></svg>
<div class="a" style="left:1246px;top:716px;width:100px;height:1px;background:#aab0b7"></div><div class="a" style="left:1246px;top:717px;width:100px;height:1px;background:#f7f8fa"></div>
<div class="a" style="left:1295px;top:713px;width:1px;height:7px;background:#9ca1a8"></div>
<svg style="left:1297px;top:711px" width="11" height="13" viewBox="0 0 11 13"><path d="M0.5 0.5 H10 V8 L5.25 12 L0.5 8 Z" fill="#fbfbfc" stroke="#7d838b"/></svg>
<svg style="left:1346px;top:709px" width="17" height="17" viewBox="0 0 17 17"><circle cx="8.5" cy="8.5" r="7.8" fill="#f8f9fa" stroke="#8c9199"/><path d="M4.5 8.5 H12.5 M8.5 4.5 V12.5" stroke="#555" stroke-width="2"/></svg>


<!-- ============ TASKBAR ============ -->
<div id="taskbar" class="a"></div>
<svg style="left:16px;top:740px" width="17" height="17" viewBox="0 0 17 17"><path d="M0 2.4 L7 1.4 V8 H0 Z M8 1.25 L16.5 0 V8 H8 Z M0 9 H7 V15.6 L0 14.6 Z M8 9 H16.5 V17 L8 15.75 Z" fill="#fff"/></svg>
<div class="a" style="left:48px;top:728px;width:343px;height:40px;background:#f1f1f1"></div>
<svg style="left:60px;top:739px" width="17" height="18" viewBox="0 0 17 18"><circle cx="10.5" cy="6.5" r="5.3" fill="none" stroke="#111" stroke-width="1.4"/><path d="M6.7 10.3 L0.8 16.8" stroke="#111" stroke-width="1.5"/></svg>
<div class="a" style="left:88px;top:740px;font-size:14.4px;line-height:17px;color:#1a1a1a">Type here to search</div>
<div class="a" style="left:408px;top:740px;width:16px;height:16px;border:2px solid #fff;border-radius:50%"></div>
<svg style="left:455px;top:739px" width="18" height="17" viewBox="0 0 18 17"><rect x="3" y="3" width="9" height="11" fill="none" stroke="#fff" stroke-width="1.5"/><path d="M0 1 H12 M0 16 H12" stroke="#fff" stroke-width="1.5"/><path d="M15.5 2 V5 M15.5 7 V10 M15.5 12 V15" stroke="#fff" stroke-width="1.8"/></svg>
<svg style="left:504px;top:738px" width="22" height="20" viewBox="0 0 22 20"><path d="M20.5 11.5 H6 C6.5 15,9.5 17,13 17 C16 17,18.5 16,20 14.8 V18.5 C18 19.5,15.5 20,13 20 C6 20,1.5 15.5,1.5 10 C1.5 4.5,6 0,12 0 C17.5 0,21 3.5,21 9 Z M6.2 8 H16 C15.8 5,13.8 3.2,11 3.2 C8.5 3.2,6.6 5,6.2 8 Z" fill="#1f8fe6"/><path d="M1.5 10 C3 3,9 0,12 0 C6 1.5,3 6,3 11 Z" fill="#0f6fd0"/></svg>
<svg style="left:551px;top:736px" width="25" height="23" viewBox="0 0 25 23"><path d="M8 7 V5 C8 2,10 0.8,12.5 0.8 C15 0.8,17 2,17 5 V7" fill="none" stroke="#fff" stroke-width="1.6"/><rect x="1" y="6.5" width="23" height="16" rx="1" fill="#fff"/><rect x="8" y="9" width="4" height="4" fill="#f25022"/><rect x="13" y="9" width="4" height="4" fill="#7fba00"/><rect x="8" y="14" width="4" height="4" fill="#00a4ef"/><rect x="13" y="14" width="4" height="4" fill="#ffb900"/></svg>
<svg style="left:601px;top:738px" width="24" height="19" viewBox="0 0 24 19"><path d="M0 7 L12 0 L24 7 V19 H0 Z" fill="#fff"/><path d="M0 7.5 L12 14 L24 7.5" fill="none" stroke="#22373f" stroke-width="1.6"/><path d="M14 11.5 L24 17" stroke="#22373f" stroke-width="1.2"/></svg>
<svg style="left:650px;top:739px" width="23" height="19" viewBox="0 0 23 19"><path d="M0 1 H8 L10 3 H22 V18 H0 Z" fill="#e9b43a"/><rect x="0" y="5" width="23" height="14" fill="#f8d16a"/><rect x="6" y="11" width="11" height="8" fill="#2a7cd6"/><rect x="9" y="11" width="5" height="4" fill="#f8d16a"/></svg>
<svg style="left:699px;top:737px" width="23" height="23" viewBox="0 0 24 24"><circle cx="12" cy="12" r="11.5" fill="#db4437"/><path d="M12 12 L22 6.2 A11.5 11.5 0 0 1 12 23.5 Z" fill="#f4c20d"/><path d="M12 12 L12 23.5 A11.5 11.5 0 0 1 2 6.2 Z" fill="#0f9d58"/><path d="M12 12 L2 6.2 A11.5 11.5 0 0 1 22 6.2 Z" fill="#db4437"/><circle cx="12" cy="12" r="5.3" fill="#fff"/><circle cx="12" cy="12" r="4.2" fill="#4285f4"/></svg>
<div class="a" style="left:736px;top:728px;width:48px;height:40px;background:#4a5a61"></div>
<div class="a" style="left:736px;top:766px;width:48px;height:2px;background:#76b9ed"></div>
<svg style="left:748px;top:736px" width="23" height="22" viewBox="0 0 23 22"><defs><linearGradient id="wtb" x1="0" y1="0" x2="1" y2="1"><stop offset="0" stop-color="#dfe9f8"/><stop offset=".5" stop-color="#fff"/><stop offset="1" stop-color="#f4f7fc"/></linearGradient><linearGradient id="wtw" x1="0" y1="0" x2="0" y2="1"><stop offset="0" stop-color="#3b8ae0"/><stop offset="1" stop-color="#0b3fb0"/></linearGradient></defs><path d="M2.5 0.5 H21.5 V21.5 H0.5 V2.5 Z" fill="url(#wtb)" stroke="#2b54a8"/><path d="M16 10 L21 7 V20 L16 19 Z" fill="#5b8fe0"/><path d="M3 4 H8 L9.8 13 L12 5 H14.5 L16.5 13 L18 4 H21 L18 18 H15 L13.2 10.5 L11.2 18 H8 Z" fill="url(#wtw)"/><path d="M14 19 L21.5 13 V21.5 H12 Z" fill="#fff"/></svg>
<!-- tray -->
<svg style="left:1159px;top:743px" width="13" height="9" viewBox="0 0 13 9"><path d="M1 8 L6.5 1.5 L12 8" fill="none" stroke="#fff" stroke-width="1.3"/></svg>
<svg style="left:1183px;top:740px" width="13" height="16" viewBox="0 0 13 16"><rect x="1" y="4" width="7" height="8" rx="1" fill="none" stroke="#fff" stroke-width="1.2"/><path d="M8 6.5 L12 4.5 V11.5 L8 9.5" fill="none" stroke="#fff" stroke-width="1.2"/><path d="M1 2 C3 0.5,6 0.5,8 2 M1 14 C3 15.5,6 15.5,8 14" fill="none" stroke="#fff" stroke-width="1"/></svg>
<svg style="left:1204px;top:740px" width="18" height="16" viewBox="0 0 18 16"><path d="M1 5.5 H4 L8.5 1.5 V14.5 L4 10.5 H1 Z" fill="none" stroke="#fff" stroke-width="1.2"/><path d="M11 5.5 C12 7,12 9,11 10.5 M13.5 3.5 C15.5 6,15.5 10,13.5 12.5 M15.8 1.8 C18.5 5,18.5 11,15.8 14.2" fill="none" stroke="#fff" stroke-width="1.1"/></svg>
<svg style="left:1232px;top:740px" width="14" height="16" viewBox="0 0 14 16"><path d="M1 15 A12 12 0 0 1 13 3 M3.5 15 A9.5 9.5 0 0 1 13 5.5 M6 15 A7 7 0 0 1 13 8" fill="none" stroke="#fff" stroke-width="1.1"/><circle cx="11.5" cy="13.5" r="1.6" fill="#fff"/></svg>
<div class="a" style="left:1258px;top:731px;width:48px;text-align:center;font-size:12px;line-height:15px;color:#fff">4:39 PM</div>
<div class="a" style="left:1254px;top:749px;width:54px;text-align:center;font-size:12px;line-height:15px;color:#fff">2/27/2021</div>
<svg style="left:1325px;top:740px" width="25" height="24" viewBox="0 0 25 24"><path d="M0.5 0.5 H16.5 V11.5 H5 L2 14.5 V11.5 H0.5 Z" fill="#fff"/><path d="M3 4 H14 M3 7 H14" stroke="#1b2843" stroke-width="1"/><circle cx="15.5" cy="15" r="8" fill="#2b2b2b" stroke="#8c8c8c" stroke-width="1"/><text x="15.5" y="19.3" font-family="Liberation Sans" font-size="12" fill="#fff" text-anchor="middle">3</text></svg>
<div class="a" style="left:1361px;top:728px;width:1px;height:40px;background:#6b7b84"></div>

<!-- ============ ANNOTATIONS ============ -->
<svg style="left:0;top:0;z-index:10" width="1366" height="768" viewBox="0 0 1366 768">
 <rect x="223" y="78.5" width="97" height="41" fill="none" stroke="#000" stroke-width="2.3"/>
 <path d="M242.0 110.4 C244.0 121.7,250.3 158.9,253.8 178.0 C257.3 197.1,260.6 212.0,263.0 225.0 C265.4 238.0,267.0 246.5,268.0 256.0 C269.0 265.5,269.3 275.9,269.0 282.0 C268.7 288.1,267.4 290.2,266.0 292.5 C264.6 294.8,262.5 296.1,260.5 296.0 C258.5 295.9,256.9 294.3,254.0 292.0 C251.2 289.7,247.8 286.2,243.4 282.0 C239.0 277.8,230.0 269.1,227.3 266.5" fill="none" stroke="#000" stroke-width="2.8" stroke-linecap="round" stroke-linejoin="round"/>
 <path d="M272.0 113.0 C280.7 122.5,311.4 156.6,324.0 170.0 C336.6 183.4,342.5 187.2,347.5 193.7 C352.5 200.2,354.0 205.3,354.0 209.0 C354.0 212.7,351.7 214.9,347.5 215.8 C343.3 216.7,335.3 214.5,329.0 214.5 C322.7 214.5,313.9 214.7,309.8 215.8 C305.7 216.9,304.4 218.2,304.6 221.0 C304.8 223.8,304.7 226.6,311.0 232.7 C317.3 238.8,337.1 253.3,342.3 257.4" fill="none" stroke="#000" stroke-width="2.8" stroke-linecap="round" stroke-linejoin="round"/>
 <path d="M307.8 110.3 C311.2 110.3,321.5 109.2,328.0 110.6 C334.5 111.9,341.7 114.8,346.9 118.4 C352.1 122.1,355.2 127.0,359.4 132.5 C363.6 138.0,368.0 145.3,371.9 151.3 C375.8 157.3,379.1 163.2,382.8 168.4 C386.5 173.6,389.4 178.3,393.8 182.5 C398.2 186.7,402.9 190.4,409.4 193.4 C415.9 196.4,423.3 199.0,432.8 200.5 C442.3 202.0,460.8 202.2,466.4 202.5" fill="none" stroke="#000" stroke-width="2.8" stroke-linecap="round" stroke-linejoin="round"/>
</svg>


</body></html>
